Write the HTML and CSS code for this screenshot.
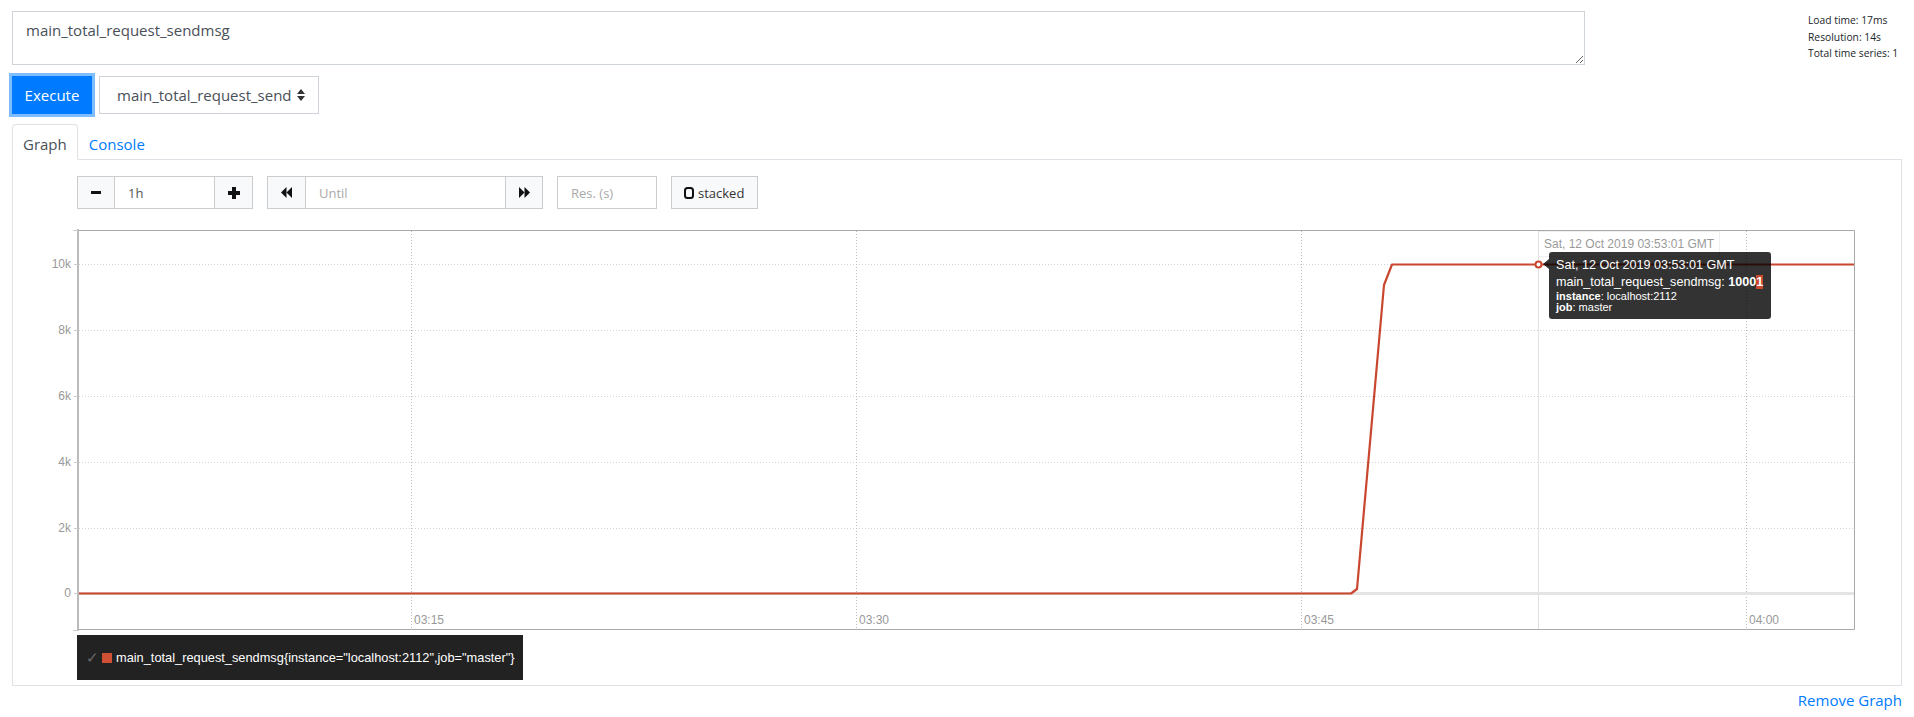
FILE: index.html
```html
<!DOCTYPE html>
<html lang="en">
<head>
    <meta charset="UTF-8">
    <title>Prometheus Time Series Collection and Processing Server</title>
    <link rel="stylesheet" href="styles.css">
</head>
<body>
<div class="page">

    <div class="query-row">
        <div class="query-col">
            <textarea class="expr">main_total_request_sendmsg</textarea>
            <div class="exec-row">
                <button class="btn-execute">Execute</button>
                <div class="metric-select">
                    <span>main_total_request_send</span>
                    <svg class="select-arrows" width="8" height="12" viewBox="0 0 8 12">
                        <polygon points="0,5 4,0 8,5" fill="#333"/>
                        <polygon points="0,7 4,12 8,7" fill="#333"/>
                    </svg>
                </div>
            </div>
        </div>
        <div class="stats">
            Load time: 17ms<br>
            Resolution: 14s<br>
            Total time series: 1
        </div>
    </div>

    <ul class="tabs">
        <li class="tab active">Graph</li>
        <li class="tab">Console</li>
    </ul>

    <div class="tab-panel">
        <div class="graph-controls">
            <div class="ctl-group">
                <button class="ctl-btn btn-minus">
                    <svg width="10" height="3"><rect width="10" height="3" fill="#111"/></svg>
                </button>
                <input class="ctl-input mid range-input" value="1h">
                <button class="ctl-btn btn-plus">
                    <svg width="12" height="12"><rect x="0" y="4" width="12" height="4" fill="#111"/><rect x="4" y="0" width="4" height="12" fill="#111"/></svg>
                </button>
            </div>
            <div class="ctl-group">
                <button class="ctl-btn btn-back">
                    <svg width="11" height="11"><polygon points="5.5,0 5.5,11 0,5.5" fill="#111"/><polygon points="11,0 11,11 5.5,5.5" fill="#111"/></svg>
                </button>
                <input class="ctl-input mid until-input" placeholder="Until">
                <button class="ctl-btn btn-fwd">
                    <svg width="11" height="11"><polygon points="0,0 0,11 5.5,5.5" fill="#111"/><polygon points="5.5,0 5.5,11 11,5.5" fill="#111"/></svg>
                </button>
            </div>
            <input class="ctl-input res-input" placeholder="Res. (s)">
            <button class="ctl-btn btn-stacked">
                <svg width="10" height="12"><rect x="1" y="1" width="8" height="10" rx="2.5" fill="none" stroke="#111" stroke-width="2"/></svg>
                <span>stacked</span>
            </button>
        </div>

        <div class="chart-wrap">
            <svg class="chart" width="1830" height="411" viewBox="40 224 1830 411">
                <!-- grid -->
                <g class="grid-h" stroke="#d4d4d4" stroke-dasharray="1,2">
                    <line x1="79" y1="264.5" x2="1854" y2="264.5"/>
                    <line x1="79" y1="330.5" x2="1854" y2="330.5"/>
                    <line x1="79" y1="396.5" x2="1854" y2="396.5"/>
                    <line x1="79" y1="462.5" x2="1854" y2="462.5"/>
                    <line x1="79" y1="528.5" x2="1854" y2="528.5"/>
                </g>
                <g class="grid-v" stroke="#bdbdbd" stroke-dasharray="1,2">
                    <line x1="411.5" y1="231" x2="411.5" y2="630"/>
                    <line x1="856.5" y1="231" x2="856.5" y2="630"/>
                    <line x1="1301.5" y1="231" x2="1301.5" y2="630"/>
                    <line x1="1746.5" y1="231" x2="1746.5" y2="630"/>
                </g>
                <line x1="79" y1="593.5" x2="1854" y2="593.5" stroke="#e4e4e4" stroke-width="3"/>
                <line x1="1538.5" y1="231" x2="1538.5" y2="630" stroke="#e2e2e2"/>

                <!-- frame and axis -->
                <path d="M78.5 230.5 H1854.5 V629.5 H78.5" fill="none" stroke="#aaa"/>
                <line x1="78" y1="229" x2="78" y2="631" stroke="#bbb" stroke-width="2"/>
                <g stroke="#ccc">
                    <line x1="73" y1="230.5" x2="78" y2="230.5"/>
                    <line x1="74" y1="264.5" x2="78" y2="264.5"/>
                    <line x1="74" y1="330.5" x2="78" y2="330.5"/>
                    <line x1="74" y1="396.5" x2="78" y2="396.5"/>
                    <line x1="74" y1="462.5" x2="78" y2="462.5"/>
                    <line x1="74" y1="528.5" x2="78" y2="528.5"/>
                    <line x1="74" y1="593.5" x2="78" y2="593.5"/>
                    <line x1="73" y1="630.5" x2="78" y2="630.5"/>
                </g>

                <g class="axis-text" text-anchor="end">
                    <text x="71" y="268">10k</text>
                    <text x="71" y="334">8k</text>
                    <text x="71" y="400">6k</text>
                    <text x="71" y="466">4k</text>
                    <text x="71" y="532">2k</text>
                    <text x="71" y="597">0</text>
                </g>
                <g class="axis-text">
                    <text x="414" y="624">03:15</text>
                    <text x="859" y="624">03:30</text>
                    <text x="1304" y="624">03:45</text>
                    <text x="1749" y="624">04:00</text>
                </g>

                <!-- series -->
                <path d="M79 593.5 L1351 593.5 L1357 589 L1384 285 L1392 264.5 L1854 264.5" fill="none" stroke="#c9472f" stroke-width="2.2" stroke-linejoin="round"/>
                <circle cx="1538.5" cy="264.5" r="3" fill="#fff" stroke="#c9472f" stroke-width="2"/>
            </svg>

            <div class="hover-label">Sat, 12 Oct 2019 03:53:01 GMT</div>
            <div class="hover-item">
                <div class="hover-date">Sat, 12 Oct 2019 03:53:01 GMT</div>
                <div class="hover-value">main_total_request_sendmsg: <b>1000<span class="hl">1</span></b></div>
                <div class="hover-labels"><b>instance</b>: localhost:2112<br><b>job</b>: master</div>
            </div>
        </div>

        <div class="legend">
            <span class="legend-check">✓</span>
            <span class="legend-swatch"></span>
            <span>main_total_request_sendmsg{instance="localhost:2112",job="master"}</span>
        </div>
    </div>

    <div class="remove-row"><a href="#">Remove Graph</a></div>
</div>
</body>
</html>
```

FILE: styles.css
```css
* {
    box-sizing: border-box;
}

body {
    margin: 0;
    font-family: "Open Sans", sans-serif;
    font-size: 15px;
    color: #212529;
    background-color: #fff;
}

.page {
    padding: 11px 12px 0;
}

/* query area */
.query-row {
    display: flex;
}

.query-col {
    width: 1573px;
}

.expr {
    display: block;
    width: 100%;
    height: 54px;
    padding: 6px 13px;
    border: 1px solid #ced4da;
    font-family: "Open Sans", sans-serif;
    font-size: 15px;
    line-height: 24px;
    color: #495057;
    resize: vertical;
}

.exec-row {
    display: flex;
    margin-top: 11px;
}

.btn-execute {
    width: 80px;
    height: 38px;
    padding: 0;
    background-color: #007bff;
    border: 1px solid #007bff;
    color: white;
    font-family: "Open Sans", sans-serif;
    font-size: 15px;
    box-shadow: 0 0 0 3px rgba(0, 123, 255, 0.5);
}

.metric-select {
    display: flex;
    align-items: center;
    width: 220px;
    height: 38px;
    margin-left: 7px;
    padding-left: 17px;
    border: 1px solid #ced4da;
    color: #495057;
}

.select-arrows {
    margin-left: auto;
    margin-right: 13px;
}

.stats {
    margin-left: 223px;
    padding-top: 1px;
    font-size: 10.3px;
    line-height: 16.5px;
}

/* tabs */
.tabs {
    display: flex;
    list-style: none;
    margin: 10px 0 0;
    padding: 0;
    border-bottom: 1px solid #dee2e6;
}

.tab {
    height: 36px;
    margin-bottom: -1px;
    padding: 4px 10px 0;
    line-height: 30px;
    border: 1px solid transparent;
    border-radius: 4px 4px 0 0;
    color: #007bff;
}

.tab.active {
    color: #495057;
    background-color: #fff;
    border-color: #dee2e6 #dee2e6 #fff;
}

.tab-panel {
    border: 1px solid #dee2e6;
    border-top: none;
    padding: 16px 0 5px;
}

/* graph controls */
.graph-controls {
    display: flex;
    gap: 14px;
    height: 33px;
    margin-left: 64px;
}

.ctl-group {
    display: flex;
}

.ctl-btn {
    display: flex;
    align-items: center;
    justify-content: center;
    height: 33px;
    padding: 0;
    border: 1px solid #ccc;
    background-color: #f8f9fa;
}

.btn-minus { width: 38px; }
.btn-plus { width: 39px; }
.btn-back { width: 39px; }
.btn-fwd { width: 38px; }

.btn-stacked {
    width: 87px;
    justify-content: flex-start;
    padding-left: 12px;
    gap: 4px;
    font-family: "Open Sans", sans-serif;
    font-size: 13px;
    color: #333;
}

.ctl-input {
    height: 33px;
    padding: 0 13px;
    border: 1px solid #ccc;
    font-family: "Open Sans", sans-serif;
    font-size: 13px;
    color: #555;
    outline: none;
}

.ctl-input::placeholder {
    color: #aaa;
}

.ctl-input.mid {
    border-left: none;
    border-right: none;
}

.range-input { width: 99px; }
.until-input { width: 199px; }
.res-input { width: 100px; }

/* chart */
.chart-wrap {
    position: relative;
    width: 1830px;
    height: 411px;
    margin: 15px 0 0 27px;
}

.chart {
    display: block;
}

.axis-text text {
    font-family: "Liberation Sans", Arial, sans-serif;
    font-size: 12px;
    fill: #999;
}

.hover-label {
    position: absolute;
    left: 1498px;
    top: 7px;
    padding: 4px 5px;
    border: 1px solid #e0e0e0;
    background-color: #fff;
    opacity: 0.5;
    font-family: "Liberation Sans", Arial, sans-serif;
    font-size: 12px;
    line-height: 16px;
    color: #333;
    white-space: nowrap;
}

.hover-item {
    position: absolute;
    left: 1509px;
    top: 28px;
    width: 222px;
    height: 67px;
    padding: 5px 7px;
    background-color: rgba(0, 0, 0, 0.8);
    border-radius: 3px;
    color: white;
    font-family: "Liberation Sans", Arial, sans-serif;
    font-size: 12.6px;
    white-space: nowrap;
}

.hover-item::before {
    content: "";
    position: absolute;
    left: -6px;
    top: 7px;
    border-top: 5px solid transparent;
    border-bottom: 5px solid transparent;
    border-right: 6px solid rgba(0, 0, 0, 0.8);
}

.hover-date {
    line-height: 16px;
}

.hover-value {
    line-height: 18px;
}

.hl {
    background-color: #c9472f;
}

.hover-labels {
    font-size: 11px;
    line-height: 11px;
}

/* legend */
.legend {
    display: inline-flex;
    align-items: center;
    height: 45px;
    margin-left: 64px;
    padding: 0 8px 0 9px;
    background-color: #222;
    color: #fff;
    font-family: "Liberation Sans", Arial, sans-serif;
    font-size: 12.8px;
}

.legend-check {
    color: #6a6a6a;
    font-size: 15px;
    margin-right: 3px;
}

.legend-swatch {
    display: inline-block;
    width: 10px;
    height: 10px;
    margin-right: 4px;
    background-color: #cf5035;
}

.remove-row {
    margin-top: 2px;
    text-align: right;
    line-height: 24px;
}

.remove-row a {
    color: #007bff;
    text-decoration: none;
}
```
